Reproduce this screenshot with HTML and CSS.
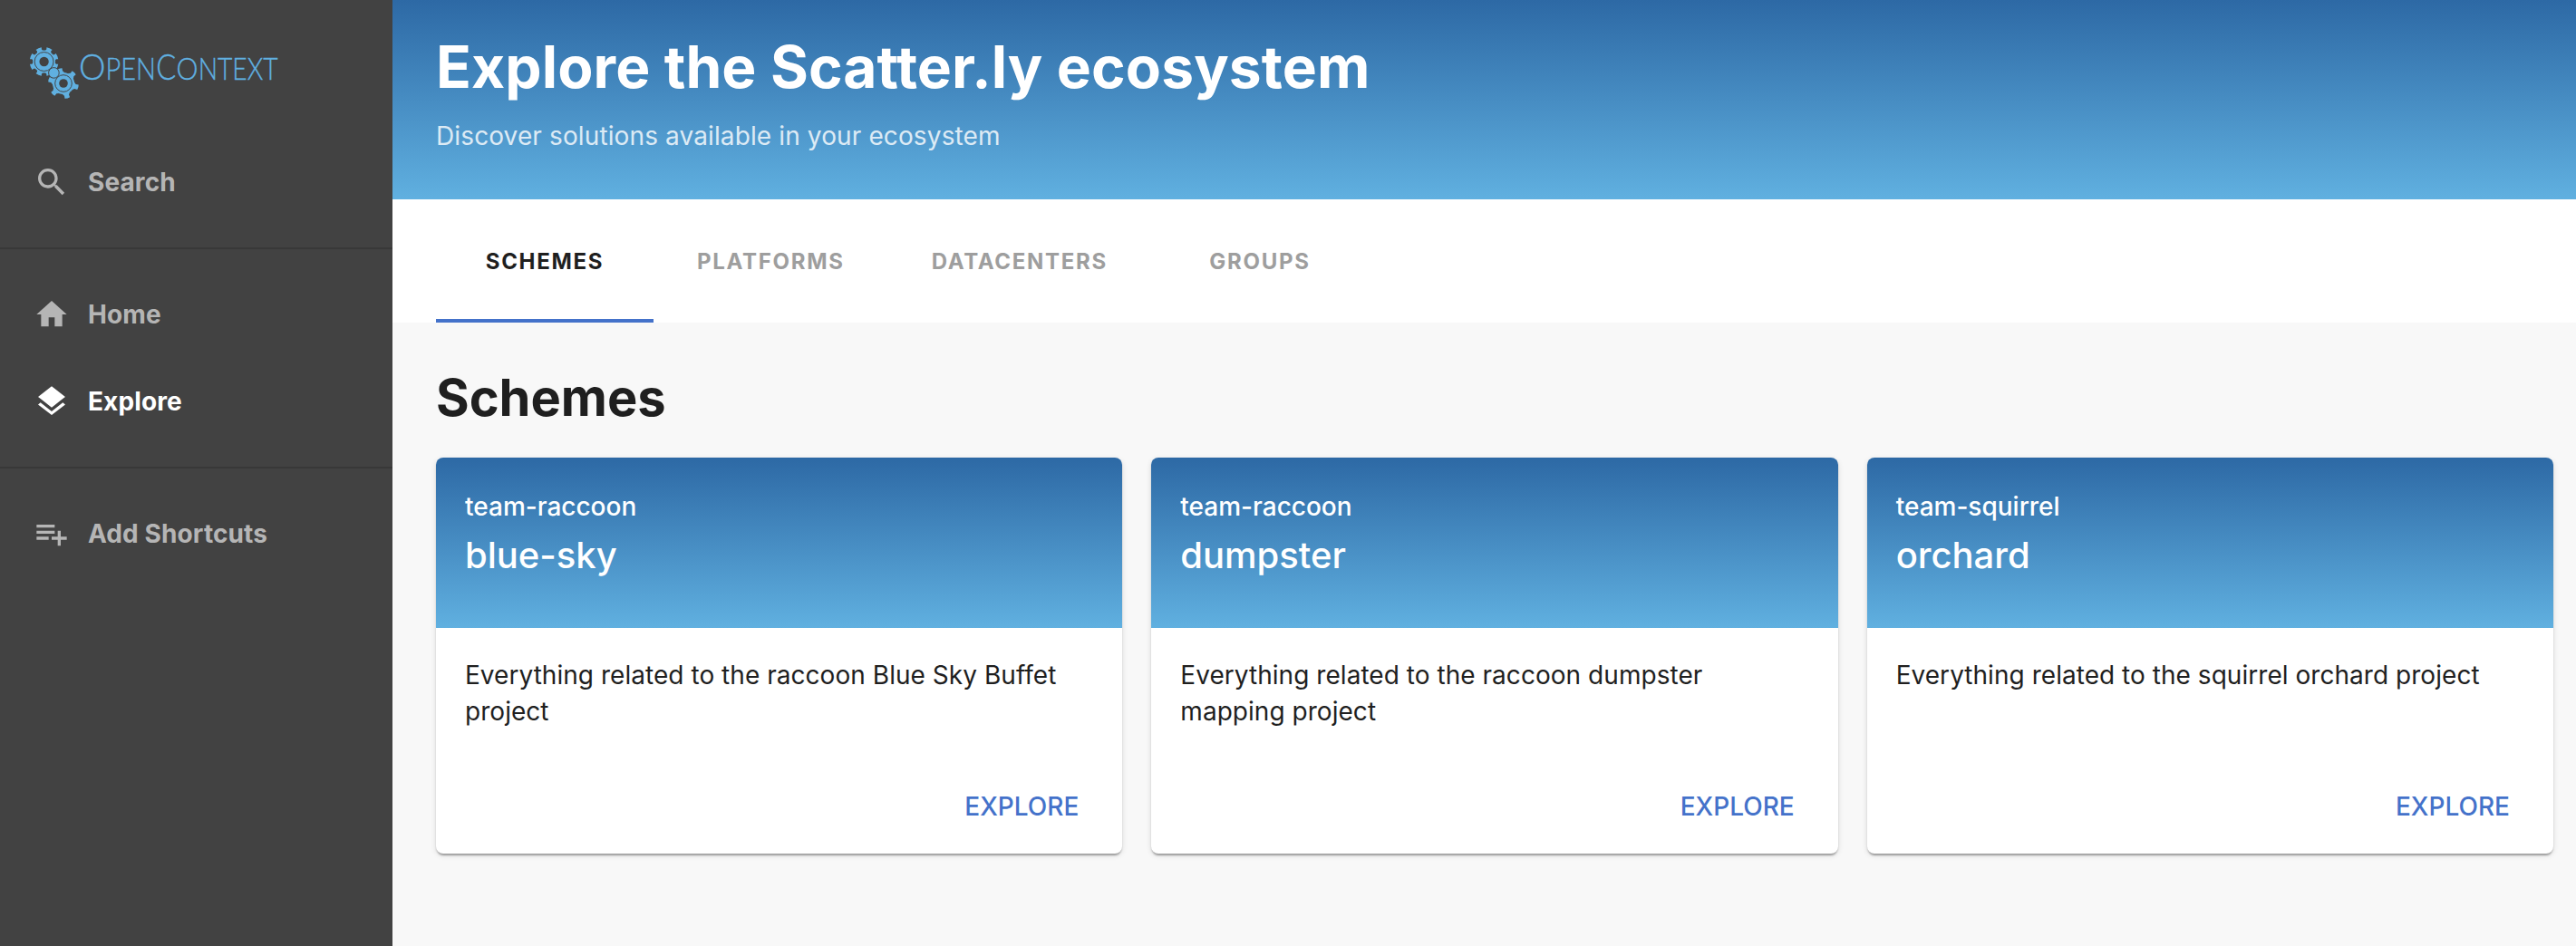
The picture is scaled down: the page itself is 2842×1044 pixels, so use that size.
FILE: index.html
```html
<!DOCTYPE html>
<html lang="en">
<head>
<meta charset="utf-8">
<title>Explore the Scatter.ly ecosystem</title>
<link rel="stylesheet" href="styles.css">
</head>
<body>
<div class="page">
  <aside class="sidebar">
    <svg class="logo" viewBox="0 0 433 153" role="img" aria-label="OpenContext">
      <defs>
        <path id="tooth-a" d="M-3.6 -12 L-2.8 -14 L-3.5 -16.2 Q0 -17 3.5 -16.2 L2.8 -14 L3.6 -12Z"/>
        <path id="tooth-b" d="M-4.6 -11.5 L-2.7 -14 L-3 -17.2 Q0 -18.2 3 -17.2 L2.7 -14 L4.6 -11.5Z"/>
      </defs>
      <g class="gear" transform="translate(48.6 68) scale(0.96)">
        <circle r="13"/>
        <use href="#tooth-a" transform="rotate(22.5)"/><use href="#tooth-a" transform="rotate(67.5)"/>
        <use href="#tooth-a" transform="rotate(112.5)"/><use href="#tooth-a" transform="rotate(157.5)"/>
        <use href="#tooth-a" transform="rotate(202.5)"/><use href="#tooth-a" transform="rotate(247.5)"/>
        <use href="#tooth-a" transform="rotate(292.5)"/><use href="#tooth-a" transform="rotate(337.5)"/>
        <circle class="groove" r="10.9"/>
        <circle class="hole" r="5.4"/>
      </g>
      <g class="gear" transform="translate(70 92) scale(0.96)">
        <circle r="12.6"/>
        <use href="#tooth-b" transform="rotate(-15)"/><use href="#tooth-b" transform="rotate(45)"/>
        <use href="#tooth-b" transform="rotate(105)"/><use href="#tooth-b" transform="rotate(165)"/>
        <use href="#tooth-b" transform="rotate(225)"/><use href="#tooth-b" transform="rotate(285)"/>
        <circle class="groove" r="9.7"/>
        <circle class="hole" r="5"/>
      </g>
      <circle class="hub" cx="59.4" cy="80.4" r="5.8"/>
      <text class="wordmark" y="88"><tspan class="big" x="87" textLength="29.5" lengthAdjust="spacingAndGlyphs">O</tspan><tspan x="116.5" textLength="55.5" lengthAdjust="spacingAndGlyphs">PEN</tspan><tspan class="big" x="172.2" textLength="22" lengthAdjust="spacingAndGlyphs">C</tspan><tspan x="194.5" textLength="24" lengthAdjust="spacingAndGlyphs">O</tspan><tspan x="218.7" textLength="88" lengthAdjust="spacingAndGlyphs">NTEXT</tspan></text>
    </svg>
    <nav class="nav">
      <a class="item"><svg class="icon" viewBox="0 0 24 24"><path d="M15.5 14h-.79l-.28-.27C15.41 12.59 16 11.11 16 9.5 16 5.91 13.09 3 9.5 3S3 5.91 3 9.5 5.91 16 9.5 16c1.61 0 3.09-.59 4.23-1.57l.27.28v.79l5 4.99L20.49 19l-4.99-5zm-6 0C7.01 14 5 11.99 5 9.5S7.01 5 9.5 5 14 7.01 14 9.5 11.99 14 9.5 14z"/></svg>Search</a>
      <hr class="divider">
      <a class="item"><svg class="icon" viewBox="0 0 24 24"><path d="M10 20v-6h4v6h5v-8h3L12 3 2 12h3v8z"/></svg>Home</a>
      <a class="item active"><svg class="icon" viewBox="0 0 24 24"><path d="M11.99 18.54l-7.37-5.73L3 14.07l9 7 9-7-1.63-1.27-7.38 5.74zM12 16l7.36-5.73L21 9l-9-7-9 7 1.63 1.27L12 16z"/></svg>Explore</a>
      <hr class="divider">
      <a class="item"><svg class="icon" viewBox="0 0 24 24"><path d="M14 10H2v2h12v-2zm0-4H2v2h12V6zm4 8v-4h-2v4h-4v2h4v4h2v-4h4v-2h-4zM2 16h8v-2H2v2z"/></svg>Add Shortcuts</a>
    </nav>
  </aside>
  <main class="main">
    <header class="header">
      <h1 class="title">Explore the Scatter.ly ecosystem</h1>
      <p class="subtitle">Discover solutions available in your ecosystem</p>
    </header>
    <div class="tabs">
      <div class="tab selected">SCHEMES</div>
      <div class="tab">PLATFORMS</div>
      <div class="tab">DATACENTERS</div>
      <div class="tab">GROUPS</div>
    </div>
    <section class="content">
      <h2 class="heading">Schemes</h2>
      <div class="cards">
        <article class="card">
          <div class="card-head"><div class="team">team-raccoon</div><div class="name">blue-sky</div></div>
          <p class="text">Everything related to the raccoon Blue Sky Buffet project</p>
          <div class="actions"><a class="link">EXPLORE</a></div>
        </article>
        <article class="card">
          <div class="card-head"><div class="team">team-raccoon</div><div class="name">dumpster</div></div>
          <p class="text">Everything related to the raccoon dumpster mapping project</p>
          <div class="actions"><a class="link">EXPLORE</a></div>
        </article>
        <article class="card">
          <div class="card-head"><div class="team">team-squirrel</div><div class="name">orchard</div></div>
          <p class="text">Everything related to the squirrel orchard project</p>
          <div class="actions"><a class="link">EXPLORE</a></div>
        </article>
      </div>
    </section>
  </main>
</div>
</body>
</html>
```
FILE: styles.css
```css
* { box-sizing: border-box; }
body { margin: 0; font-family: Inter, "Liberation Sans", sans-serif; font-size: 28px; color: #1f1f1f; background: #f8f8f8; }
h1, h2, p { margin: 0; }
.page { display: flex; height: 1044px; overflow: hidden; }

.sidebar { width: 433px; flex: none; background: #424242; }
.logo { display: block; width: 433px; height: 153px; }
.gear, .hub, .wordmark { fill: #60b0e0; }
.groove { fill: none; stroke: #424242; stroke-width: 1; }
.hole { fill: #424242; }
.hub { stroke: #424242; stroke-width: 1; }
.wordmark { font: 300 33px Lato, sans-serif; stroke: #60b0e0; stroke-width: 0.35; }
.wordmark .big { font-size: 39px; }
.item { display: flex; align-items: center; gap: 20px; height: 96px; padding-left: 37px; font-weight: 700; line-height: 34px; letter-spacing: 0.1px; color: #b5b5b5; }
.active { color: #fff; }
.icon { width: 40px; height: 40px; fill: currentColor; }
.divider { height: 2px; margin: 24px 0; border: 0; background: #383838; }

.main { flex: 1; min-width: 0; }
.header { height: 220px; padding: 35px 48px 0; color: #fff; background: linear-gradient(#2d69a5, #60b0e0); }
.title { font-size: 64px; font-weight: 700; line-height: 78px; letter-spacing: 0.12px; }
.subtitle { margin-top: 17px; line-height: 40px; letter-spacing: 0.12px; opacity: 0.8; }
.tabs { display: flex; height: 136px; padding-left: 48px; background: #fff; }
.tab { display: flex; align-items: center; justify-content: center; min-width: 240px; padding: 0 48px; font-size: 24px; font-weight: 700; letter-spacing: 1.7px; color: #9e9e9e; border: solid transparent; border-width: 4px 0; }
.selected { color: #1f1f1f; border-bottom-color: #4472ca; }

.content { padding: 49px 25px 0 48px; }
.heading { font-size: 56px; font-weight: 700; line-height: 68px; }
.cards { display: grid; grid-template-columns: repeat(3, 1fr); gap: 32px; margin-top: 32px; }
.card { display: flex; flex-direction: column; height: 437px; overflow: hidden; background: #fff; border-radius: 8px; box-shadow: 0 4px 2px -2px rgba(0, 0, 0, 0.2), 0 2px 2px rgba(0, 0, 0, 0.14), 0 2px 6px rgba(0, 0, 0, 0.12); }
.card-head { height: 188px; padding: 32px; font-weight: 500; color: #fff; background: linear-gradient(#2d69a5, #60b0e0); }
.team { line-height: 44px; }
.name { font-size: 40px; line-height: 64px; letter-spacing: -0.02px; }
.text { flex: 1; padding: 32px; line-height: 40px; letter-spacing: 0.04px; }
.actions { display: flex; justify-content: flex-end; padding: 0 48px 31px; }
.link { font-weight: 500; line-height: 42px; color: #4472ca; }
```
